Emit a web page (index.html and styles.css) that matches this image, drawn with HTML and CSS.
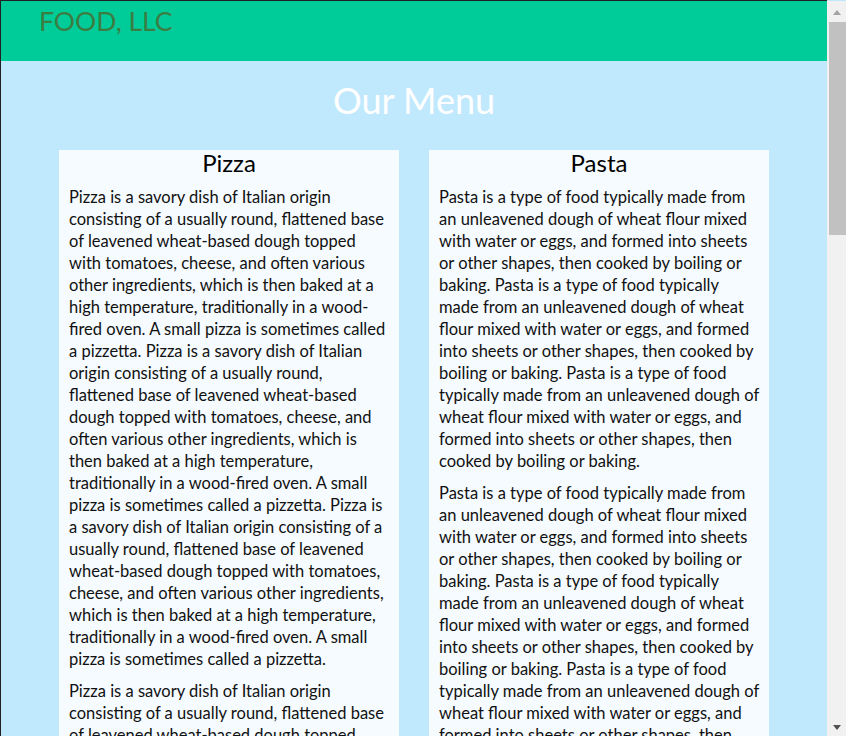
FILE: index.html
```html
<!DOCTYPE html>
<html lang="en">
<head>
<meta charset="utf-8">
<title>Food, LLC</title>
<link rel="stylesheet" href="styles.css">
</head>
<body>
<header class="site-header">
  <h1 class="brand">FOOD, LLC</h1>
</header>
<main class="menu">
  <h2 class="menu-title">Our Menu</h2>
  <div class="cards">
    <section class="card">
      <h3 class="card-title">Pizza</h3>
      <p>Pizza is a savory dish of Italian origin consisting of a usually round, flattened base of leavened wheat-based dough topped with tomatoes, cheese, and often various other ingredients, which is then baked at a high temperature, traditionally in a wood-fired oven. A small pizza is sometimes called a pizzetta. Pizza is a savory dish of Italian origin consisting of a usually round, flattened base of leavened wheat-based dough topped with tomatoes, cheese, and often various other ingredients, which is then baked at a high temperature, traditionally in a wood-fired oven. A small pizza is sometimes called a pizzetta. Pizza is a savory dish of Italian origin consisting of a usually round, flattened base of leavened wheat-based dough topped with tomatoes, cheese, and often various other ingredients, which is then baked at a high temperature, traditionally in a wood-fired oven. A small pizza is sometimes called a pizzetta.</p>
      <p>Pizza is a savory dish of Italian origin consisting of a usually round, flattened base of leavened wheat-based dough topped with tomatoes, cheese, and often various other ingredients, which is then baked at a high temperature, traditionally in a wood-fired oven. A small pizza is sometimes called a pizzetta. Pizza is a savory dish of Italian origin consisting of a usually round, flattened base of leavened wheat-based dough topped with tomatoes, cheese, and often various other ingredients, which is then baked at a high temperature, traditionally in a wood-fired oven. A small pizza is sometimes called a pizzetta. Pizza is a savory dish of Italian origin consisting of a usually round, flattened base of leavened wheat-based dough topped with tomatoes, cheese, and often various other ingredients, which is then baked at a high temperature, traditionally in a wood-fired oven. A small pizza is sometimes called a pizzetta.</p>
      <p>Pizza is a savory dish of Italian origin consisting of a usually round, flattened base of leavened wheat-based dough topped with tomatoes, cheese, and often various other ingredients, which is then baked at a high temperature, traditionally in a wood-fired oven. A small pizza is sometimes called a pizzetta. Pizza is a savory dish of Italian origin consisting of a usually round, flattened base of leavened wheat-based dough topped with tomatoes, cheese, and often various other ingredients, which is then baked at a high temperature, traditionally in a wood-fired oven. A small pizza is sometimes called a pizzetta. Pizza is a savory dish of Italian origin consisting of a usually round, flattened base of leavened wheat-based dough topped with tomatoes, cheese, and often various other ingredients, which is then baked at a high temperature, traditionally in a wood-fired oven. A small pizza is sometimes called a pizzetta.</p>
    </section>
    <section class="card">
      <h3 class="card-title">Pasta</h3>
      <p>Pasta is a type of food typically made from an unleavened dough of wheat flour mixed with water or eggs, and formed into sheets or other shapes, then cooked by boiling or baking. Pasta is a type of food typically made from an unleavened dough of wheat flour mixed with water or eggs, and formed into sheets or other shapes, then cooked by boiling or baking. Pasta is a type of food typically made from an unleavened dough of wheat flour mixed with water or eggs, and formed into sheets or other shapes, then cooked by boiling or baking.</p>
      <p>Pasta is a type of food typically made from an unleavened dough of wheat flour mixed with water or eggs, and formed into sheets or other shapes, then cooked by boiling or baking. Pasta is a type of food typically made from an unleavened dough of wheat flour mixed with water or eggs, and formed into sheets or other shapes, then cooked by boiling or baking. Pasta is a type of food typically made from an unleavened dough of wheat flour mixed with water or eggs, and formed into sheets or other shapes, then cooked by boiling or baking.</p>
      <p>Pasta is a type of food typically made from an unleavened dough of wheat flour mixed with water or eggs, and formed into sheets or other shapes, then cooked by boiling or baking. Pasta is a type of food typically made from an unleavened dough of wheat flour mixed with water or eggs, and formed into sheets or other shapes, then cooked by boiling or baking. Pasta is a type of food typically made from an unleavened dough of wheat flour mixed with water or eggs, and formed into sheets or other shapes, then cooked by boiling or baking.</p>
    </section>
  </div>
  <div class="cards">
    <section class="card">
      <h3 class="card-title">Salad</h3>
      <p>Salad is a dish consisting of mixed pieces of food, typically with at least one raw ingredient. Salads are often dressed and typically served at room temperature or chilled. Salad is a dish consisting of mixed pieces of food, typically with at least one raw ingredient. Salads are often dressed and typically served at room temperature or chilled.</p>
      <p>Salad is a dish consisting of mixed pieces of food, typically with at least one raw ingredient. Salads are often dressed and typically served at room temperature or chilled. Salad is a dish consisting of mixed pieces of food, typically with at least one raw ingredient. Salads are often dressed and typically served at room temperature or chilled.</p>
    </section>
    <section class="card">
      <h3 class="card-title">Soup</h3>
      <p>Soup is a primarily liquid food, generally served warm or hot, that is made by combining ingredients of meat or vegetables with stock, milk, or water. Soup is a primarily liquid food, generally served warm or hot, that is made by combining ingredients of meat or vegetables with stock, milk, or water.</p>
      <p>Soup is a primarily liquid food, generally served warm or hot, that is made by combining ingredients of meat or vegetables with stock, milk, or water. Soup is a primarily liquid food, generally served warm or hot, that is made by combining ingredients of meat or vegetables with stock, milk, or water.</p>
    </section>
  </div>
</main>
<div class="scrollbar" aria-hidden="true">
  <span class="scroll-arrow scroll-up"></span>
  <span class="scroll-thumb"></span>
  <span class="scroll-arrow scroll-down"></span>
</div>
</body>
</html>
```

FILE: styles.css
```css
* { box-sizing: border-box; }

html, body {
  margin: 0;
  padding: 0;
}

html {
  scrollbar-width: none;
}

body {
  background: #c1e9fd;
  font-family: Lato, "Noto Sans", sans-serif;
  color: #111;
  border-top: 1px solid #202124;
  border-left: 1px solid #202124;
  margin-right: 19px;
}

.site-header {
  background: #00cc99;
  height: 60px;
  padding: 0 38px;
}

.brand {
  margin: 0;
  font-size: 26.5px;
  font-weight: 400;
  line-height: 40px;
  color: #3b7d42;
}

.menu {
  padding: 17px 0 30px;
}

.menu-title {
  margin: 0 0 28px;
  font-size: 36px;
  font-weight: 400;
  line-height: 44px;
  text-align: center;
  color: #fff;
}

.cards {
  display: grid;
  grid-template-columns: 340px 340px;
  justify-content: center;
  gap: 30px;
  margin-bottom: 30px;
}

.card {
  background: #f5fbff;
  padding: 0 10px 10px;
}

.card-title {
  margin: 0;
  font-size: 24px;
  font-weight: 400;
  line-height: 26px;
  text-align: center;
  color: #000;
}

.card p {
  margin: 10px 0;
  font-size: 16.5px;
  line-height: 22px;
}

.scrollbar {
  position: fixed;
  top: 1px;
  right: 0;
  bottom: 0;
  width: 19px;
  background: #f1f1f1;
  display: flex;
  flex-direction: column;
  align-items: flex-end;
}

.scroll-arrow {
  flex: 0 0 21px;
  width: 17px;
  position: relative;
}

.scroll-arrow::after {
  content: "";
  position: absolute;
  left: 4px;
  border-left: 4.5px solid transparent;
  border-right: 4.5px solid transparent;
}

.scroll-up::after {
  top: 9px;
  border-bottom: 5px solid #a3a3a3;
}

.scroll-down {
  margin-top: auto;
  flex-basis: 17px;
}

.scroll-down::after {
  top: 6px;
  border-top: 5px solid #505050;
}

.scroll-thumb {
  width: 17px;
  height: 213px;
  background: #c1c1c1;
}
```
